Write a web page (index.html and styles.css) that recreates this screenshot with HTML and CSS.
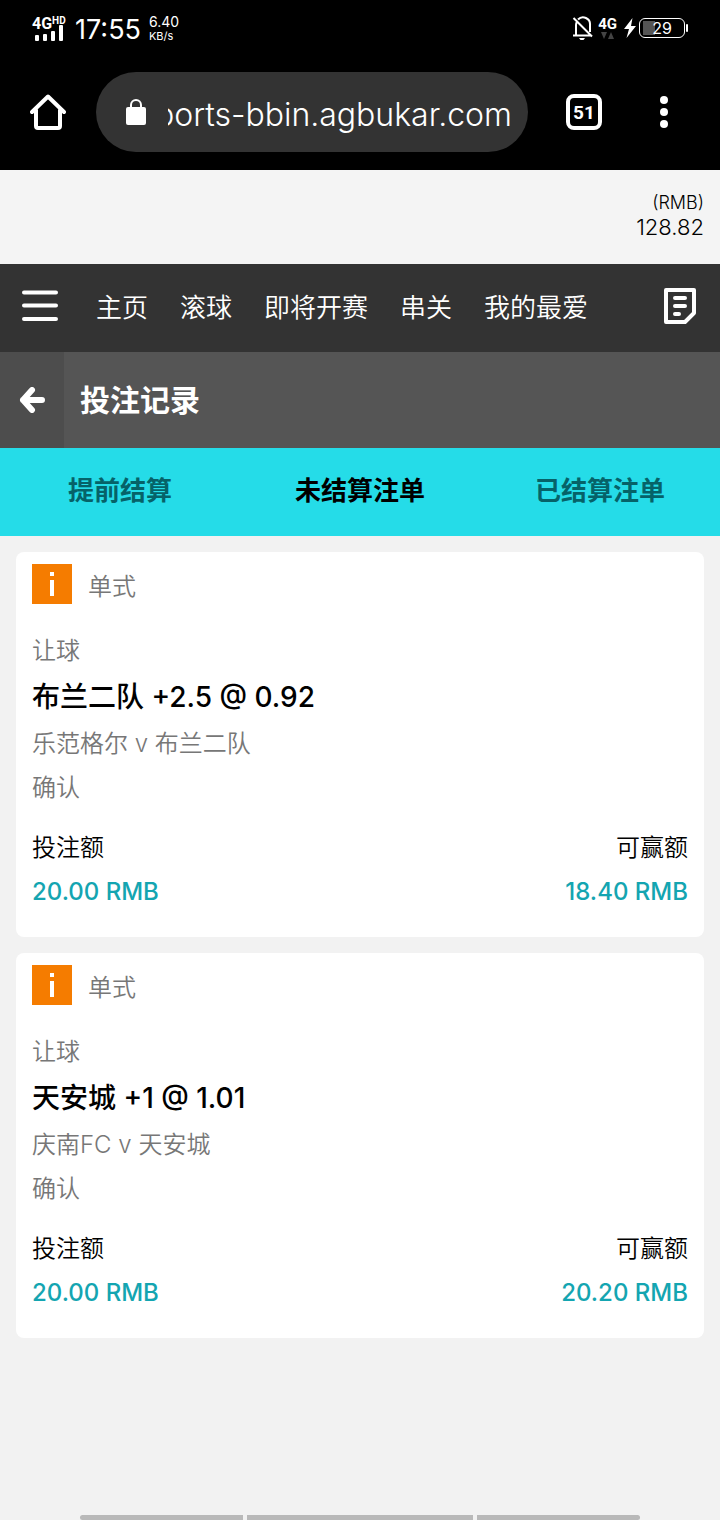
FILE: index.html
```html
<!DOCTYPE html>
<html lang="zh-CN">
<head>
<meta charset="utf-8">
<meta name="viewport" content="width=device-width, initial-scale=1">
<title>投注记录</title>
<link rel="stylesheet" href="styles.css">
</head>
<body>
<div class="status">
  <div class="signal">
    <span class="net">4G<sup class="hd">HD</sup></span>
    <svg width="30" height="16" viewBox="0 0 30 16" fill="#fff" aria-hidden="true"><rect x="1" y="10" width="4" height="6" rx="1"/><rect x="9" y="9" width="4" height="7" rx="1"/><rect x="17" y="6" width="4" height="10" rx="1"/><rect x="25" y="0" width="4" height="16" rx="1"/></svg>
  </div>
  <span class="clock">17:55</span>
  <span class="speed"><span>6.40</span><span class="unit">KB/s</span></span>
  <div class="indicators">
    <svg width="22" height="26" viewBox="0 0 22 26" fill="none" stroke="#fff" stroke-width="2" aria-hidden="true"><path d="M4 20V10a7 7 0 0 1 1-3.500M6 4.500a7 7 0 0 1 12 5.500v7M1 20.500h18M1.500 3 20 21.500"/><path d="M7 23h6l-1.500 2h-3z" fill="#fff" stroke="none"/></svg>
    <div class="data"><span>4G</span><svg width="16" height="8" viewBox="0 0 16 8" fill="#444" aria-hidden="true"><path d="M1 0h6L4 7zM8 7h6L11 0z"/></svg></div>
    <svg class="bolt" width="14" height="20" viewBox="0 0 14 20" fill="#fff" aria-hidden="true"><path d="M9.500 0 1 11h5L3.500 20 13 8H8z"/></svg>
    <div class="battery"><span class="level">29</span></div>
  </div>
</div>
<header class="browser">
  <button class="bare home" aria-label="主屏幕"><svg width="36" height="36" viewBox="0 0 36 36" fill="none" stroke="#fff" stroke-width="4" stroke-linejoin="round" stroke-linecap="round"><path d="M2 18 18 2.500 34 18M6 16v16q0 2 2 2h20q2 0 2-2V16"/></svg></button>
  <div class="address">
    <svg width="20" height="26" viewBox="0 0 20 26" aria-hidden="true"><rect y="8" width="20" height="18" rx="2" fill="#fff"/><path d="M5 9V6a5 5 0 0 1 10 0v3" fill="none" stroke="#fff" stroke-width="2"/></svg>
    <input class="url" type="text" dir="rtl" aria-label="网址" value="sports-bbin.agbukar.com">
  </div>
  <button class="bare count" aria-label="标签页">51</button>
  <button class="bare more" aria-label="更多"><svg width="8" height="32" viewBox="0 0 8 32" fill="#fff"><circle cx="4" cy="4" r="4"/><circle cx="4" cy="16" r="4"/><circle cx="4" cy="28" r="4"/></svg></button>
</header>
<div class="balance"><span class="currency">(RMB)</span><span class="sum">128.82</span></div>
<nav class="nav">
  <button class="bare menu" aria-label="菜单"><svg width="36" height="32" viewBox="0 0 36 32" stroke="#fff" stroke-width="4" stroke-linecap="round"><path d="M2 2.500h32M2 15.500h32M2 29h32"/></svg></button>
  <div class="links"><a href="#">主页</a><a href="#">滚球</a><a href="#">即将开赛</a><a href="#">串关</a><a href="#">我的最爱</a></div>
  <button class="bare slip" aria-label="注单"><svg width="32" height="36" viewBox="0 0 32 36" fill="none" stroke="#fff" stroke-width="4" stroke-linejoin="round"><path d="M2 2h28v23l-9 9H2z"/><path d="M11 10h10M11 18h10M11 26h4" stroke-linecap="round"/></svg></button>
</nav>
<div class="heading">
  <button class="bare back" aria-label="返回"><svg width="26" height="26" viewBox="0 0 26 26" fill="none" stroke="#fff" stroke-width="6" stroke-linecap="round" stroke-linejoin="round"><path d="M13 3 4 13 13 23M4 13h19"/></svg></button>
  <h1 class="title">投注记录</h1>
</div>
<div class="tabs">
  <button class="bare tab">提前结算</button>
  <button class="bare tab active">未结算注单</button>
  <button class="bare tab">已结算注单</button>
</div>
<main class="bets">
  <article class="card">
    <div class="kind"><svg width="40" height="40" viewBox="0 0 40 40" aria-hidden="true"><rect width="40" height="40" fill="#f57c00"/><path d="M18 8h4v4h-4zM18 16h4v16h-4z" fill="#fff"/></svg><span>单式</span></div>
    <div class="line">让球</div>
    <h2 class="pick">布兰二队 +2.5 @ 0.92</h2>
    <div class="line">乐范格尔 v 布兰二队</div>
    <div class="line">确认</div>
    <dl class="amounts">
      <div><dt>投注额</dt><dd>20.00 RMB</dd></div>
      <div class="win"><dt>可赢额</dt><dd>18.40 RMB</dd></div>
    </dl>
  </article>
  <article class="card">
    <div class="kind"><svg width="40" height="40" viewBox="0 0 40 40" aria-hidden="true"><rect width="40" height="40" fill="#f57c00"/><path d="M18 8h4v4h-4zM18 16h4v16h-4z" fill="#fff"/></svg><span>单式</span></div>
    <div class="line">让球</div>
    <h2 class="pick">天安城 +1 @ 1.01</h2>
    <div class="line">庆南FC v 天安城</div>
    <div class="line">确认</div>
    <dl class="amounts">
      <div><dt>投注额</dt><dd>20.00 RMB</dd></div>
      <div class="win"><dt>可赢额</dt><dd>20.20 RMB</dd></div>
    </dl>
  </article>
</main>
<div class="gestures"><i></i><i></i><i></i></div>
</body>
</html>
```
FILE: styles.css
```css
* { box-sizing: border-box; }
body {
  margin: 0;
  min-height: 100vh;
  display: flex;
  flex-direction: column;
  background: #f2f2f2;
  color: #000;
  font-family: Inter, "Noto Sans CJK SC", sans-serif;
  font-size: 24px;
  font-weight: 350;
}
svg { display: block; flex: none; }
.bare {
  padding: 0;
  border: 0;
  background: none;
  color: inherit;
  font: inherit;
  display: flex;
  align-items: center;
  justify-content: center;
}

.status {
  height: 56px;
  padding: 0 35px 0 32px;
  display: flex;
  align-items: center;
  background: #000;
  color: #fff;
}
.signal { width: 36px; display: flex; flex-direction: column; }
.signal svg { margin-left: 2px; margin-top: -7px; }
.net { font-family: Roboto, sans-serif; font-size: 16px; line-height: 16px; font-weight: 700; display: flex; }
.hd { font-size: 10px; line-height: 10px; }
.clock { margin-left: 7px; font-size: 27px; line-height: 32px; font-weight: 400; padding-top: 4px; }
.speed {
  margin-left: 8px;
  display: flex;
  flex-direction: column;
  font-size: 14px;
  line-height: 16px;
  font-weight: 400;
}
.unit { font-size: 11px; line-height: 12px; }
.indicators { margin-left: auto; display: flex; align-items: center; }
.data {
  margin-left: 4px;
  display: flex;
  flex-direction: column;
  align-items: center;
  font-family: Roboto, sans-serif;
  font-size: 15px;
  line-height: 16px;
  font-weight: 700;
}
.bolt { margin-left: 6px; }
.battery {
  position: relative;
  margin-left: 2px;
  width: 46px;
  height: 20px;
  border: 1px solid #fff;
  border-radius: 6px;
  background: linear-gradient(#555, #555) 3px 2px / 12px 14px no-repeat;
  font-size: 16px;
  line-height: 18px;
  font-weight: 400;
  text-align: center;
}
.battery::after {
  content: "";
  position: absolute;
  top: 5px;
  right: -4px;
  width: 2px;
  height: 8px;
  border-radius: 1px;
  background: #fff;
}

.browser {
  height: 114px;
  padding: 16px 30px 18px;
  display: flex;
  align-items: center;
  background: #000;
  color: #fff;
}
.address {
  flex: 1;
  min-width: 0;
  height: 80px;
  margin: 0 38px 0 30px;
  padding: 0 16px 0 30px;
  display: flex;
  align-items: center;
  gap: 22px;
  border-radius: 40px;
  background: #333;
}
.url {
  flex: 1;
  min-width: 0;
  height: 48px;
  padding: 4px 0 0;
  border: 0;
  outline: 0;
  background: none;
  color: #fff;
  font: inherit;
  font-size: 32px;
  font-weight: 300;
}
.count {
  width: 36px;
  height: 36px;
  border: 4px solid #fff;
  border-radius: 8px;
  font-family: Roboto, sans-serif;
  font-size: 19px;
  font-weight: 700;
}
.more { width: 64px; margin-left: 30px; margin-right: -6px; }

.balance {
  height: 94px;
  padding: 0 16px 2px;
  display: flex;
  flex-direction: column;
  align-items: flex-end;
  justify-content: center;
  background: #f4f4f4;
  font-weight: 300;
}
.currency { font-size: 18px; line-height: 22px; }
.sum { font-size: 22px; line-height: 26px; }

.nav {
  height: 88px;
  padding: 0 24px 4px 22px;
  display: flex;
  align-items: center;
  background: #333;
  color: #fff;
}
.links {
  flex: 1;
  margin-left: 38px;
  padding-top: 4px;
  display: flex;
  gap: 32px;
  font-size: 26px;
  line-height: 40px;
  white-space: nowrap;
}
.links a { color: inherit; text-decoration: none; }

.heading { height: 96px; display: flex; background: #555; color: #fff; }
.back { width: 64px; background: #4d4d4d; }
.title { margin: 0; padding-left: 16px; font-size: 30px; line-height: 96px; font-weight: 700; }

.tabs { height: 88px; display: grid; grid-template-columns: repeat(3, 1fr); background: #25dce8; color: #066268; }
.tab { padding-bottom: 8px; font-size: 26px; font-weight: 700; }
.active { color: #000; }

.bets { padding: 16px; display: flex; flex-direction: column; gap: 16px; }
.card { padding: 0 16px 23px; border-radius: 8px; background: #fff; }
.kind { height: 64px; margin-bottom: 13px; display: flex; align-items: center; gap: 16px; color: #777; }
.line { line-height: 44px; color: #777; }
.pick { margin: 0; font-size: 28px; line-height: 49px; font-weight: 500; }
.amounts { margin: 16px 0 0; display: flex; justify-content: space-between; line-height: 44px; }
.win { text-align: right; }
dd { margin: 0; color: #14a5b1; font-weight: 500; }

.gestures {
  margin: auto 80px 0;
  height: 5px;
  display: grid;
  grid-template-columns: 163fr 226fr 163fr;
  gap: 4px;
}
.gestures i { background: #b9b9b9; }
.gestures i:first-child { border-radius: 3px 0 0 3px; }
.gestures i:last-child { border-radius: 0 3px 3px 0; }
```
